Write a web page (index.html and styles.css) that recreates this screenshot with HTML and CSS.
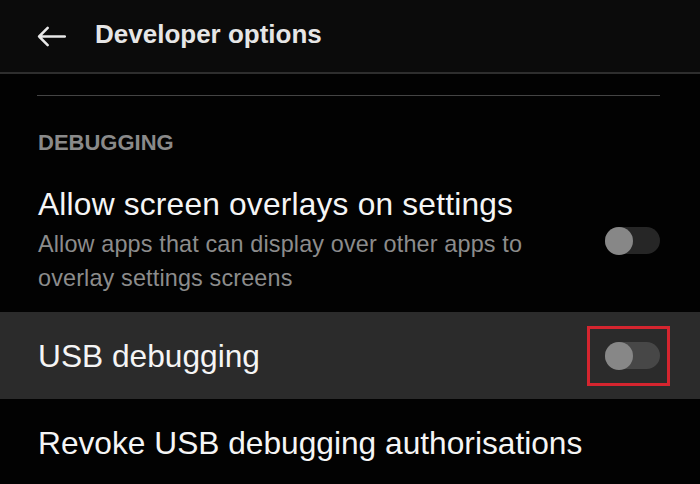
FILE: index.html
```html
<!DOCTYPE html>
<html lang="en">
  <head>
    <meta charset="UTF-8" />
    <meta name="viewport" content="width=device-width, initial-scale=1.0" />
    <title>Developer options</title>
    <link rel="stylesheet" href="styles.css">
  </head>
  <body>
    <header class="app-bar">
      <svg class="back-icon" viewBox="0 0 30 22" fill="none" stroke="currentColor" stroke-width="2.6" stroke-linecap="round" stroke-linejoin="round">
        <path d="M29 11H2M11 2L2 11l9 9" />
      </svg>
      <h1>Developer options</h1>
    </header>

    <div class="top-divider"></div>

    <section class="group">
      <h2 class="group-title">DEBUGGING</h2>

      <div class="pref-row pref-tall">
        <div class="pref-text">
          <p class="pref-title">Allow screen overlays on settings</p>
          <p class="pref-summary">Allow apps that can display over other apps to overlay settings screens</p>
        </div>
        <span class="switch"><span class="knob"></span></span>
      </div>

      <div class="pref-row pref-active">
        <div class="pref-text">
          <p class="pref-title">USB debugging</p>
        </div>
        <span class="switch-frame">
          <span class="switch"><span class="knob"></span></span>
        </span>
      </div>

      <div class="pref-row">
        <div class="pref-text">
          <p class="pref-title">Revoke USB debugging authorisations</p>
        </div>
      </div>
    </section>
  </body>
</html>
```

FILE: styles.css
```css
body {
  margin: 0;
  background-color: #020202;
  color: #f2f2f2;
  font-family: "Liberation Sans", Arial, sans-serif;
  width: 700px;
  height: 484px;
  overflow: hidden;
}

.app-bar {
  display: flex;
  align-items: center;
  height: 72px;
  background-color: #0b0b0b;
  border-bottom: 2px solid #2e2e2e;
  padding-left: 37px;
}

.back-icon {
  width: 29px;
  height: 21px;
  color: #e8e8e8;
}

.app-bar h1 {
  margin: 0 0 3px 29px;
  font-size: 26px;
  font-weight: bold;
  color: #e6e6e6;
}

.top-divider {
  height: 1px;
  background-color: #444;
  margin: 21px 40px 0 37px;
}

.group-title {
  margin: 35px 0 0 38px;
  font-size: 22px;
  font-weight: bold;
  color: #8a8a8a;
  line-height: 24px;
}

.pref-row {
  display: flex;
  align-items: center;
  padding: 0 40px 0 38px;
}

.pref-tall {
  padding-top: 31px;
  padding-bottom: 17px;
}

.pref-tall .pref-title {
  letter-spacing: 0.2px;
}

.pref-text {
  flex: 1;
}

.pref-title {
  margin: 0;
  font-size: 31.7px;
  line-height: 36px;
  color: #f5f5f5;
}

.pref-summary {
  margin: 5px 0 0;
  width: 530px;
  font-size: 23.4px;
  line-height: 34px;
  letter-spacing: 0.15px;
  color: #8c8c8c;
}

.pref-active {
  background-color: #2b2b2b;
  height: 87px;
}

.pref-row:last-child {
  height: 87px;
}

.switch {
  position: relative;
  display: block;
  width: 55px;
  height: 27px;
  border-radius: 14px;
  background-color: #262626;
}

.pref-active .switch {
  background-color: #474747;
}

.knob {
  position: absolute;
  left: 0;
  top: 0;
  width: 28px;
  height: 28px;
  margin-top: -0.5px;
  border-radius: 50%;
  background-color: #878787;
}

.switch-frame {
  display: flex;
  align-items: center;
  box-sizing: border-box;
  width: 83px;
  height: 60px;
  padding-left: 15px;
  margin-right: -10px;
  border: 3px solid #d5252f;
}
```
